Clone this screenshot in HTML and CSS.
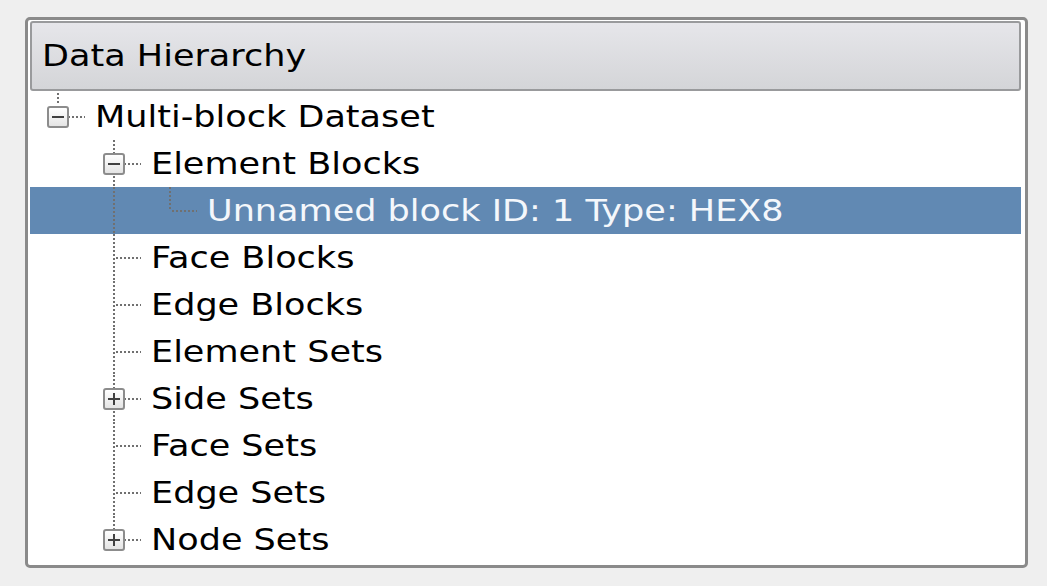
FILE: index.html
```html
<!DOCTYPE html>
<html>
<head>
<meta charset="utf-8">
<link rel="stylesheet" href="styles.css">
</head>
<body>
<div class="frame">
  <div class="header"><span class="wide">Data Hierarchy</span></div>
  <div class="tree">
    <div class="row">
      <span class="cell c-root"><span class="box minus"></span></span>
      <span class="label wide">Multi-block Dataset</span>
    </div>
    <div class="row">
      <span class="cell"></span>
      <span class="cell c-tee"><span class="box minus"></span></span>
      <span class="label wide">Element Blocks</span>
    </div>
    <div class="row selected">
      <span class="cell"></span>
      <span class="cell c-pipe"></span>
      <span class="cell c-end"></span>
      <span class="label wide">Unnamed block ID: 1 Type: HEX8</span>
    </div>
    <div class="row">
      <span class="cell"></span>
      <span class="cell c-tee"></span>
      <span class="label wide">Face Blocks</span>
    </div>
    <div class="row">
      <span class="cell"></span>
      <span class="cell c-tee"></span>
      <span class="label wide">Edge Blocks</span>
    </div>
    <div class="row">
      <span class="cell"></span>
      <span class="cell c-tee"></span>
      <span class="label wide">Element Sets</span>
    </div>
    <div class="row">
      <span class="cell"></span>
      <span class="cell c-tee"><span class="box plus"></span></span>
      <span class="label wide">Side Sets</span>
    </div>
    <div class="row">
      <span class="cell"></span>
      <span class="cell c-tee"></span>
      <span class="label wide">Face Sets</span>
    </div>
    <div class="row">
      <span class="cell"></span>
      <span class="cell c-tee"></span>
      <span class="label wide">Edge Sets</span>
    </div>
    <div class="row">
      <span class="cell"></span>
      <span class="cell c-end"><span class="box plus"></span></span>
      <span class="label wide">Node Sets</span>
    </div>
  </div>
</div>
</body>
</html>
```
FILE: styles.css
```css
html, body {
  margin: 0;
  padding: 0;
  background: #efefef;
}
body {
  padding: 17px 0 0 25px;
  font-family: "DejaVu Sans", "Liberation Sans", sans-serif;
  font-size: 30px;
  color: #000;
}
.frame {
  box-sizing: border-box;
  width: 1003px;
  height: 551px;
  border: 3px solid #8a8a8a;
  border-radius: 5px;
  background: #fff;
  padding: 1px 4px 0 2px;
}
.header {
  box-sizing: border-box;
  height: 70px;
  border: 2px solid #999a9c;
  border-radius: 3px;
  background: linear-gradient(to bottom, #e6e6ea, #d4d5d8);
  display: flex;
  align-items: center;
  padding-left: 10px;
  padding-bottom: 1px;
}
.wide {
  display: inline-block;
  white-space: nowrap;
  transform: scaleX(1.168);
  transform-origin: 0 50%;
}
.tree {
  padding-top: 2px;
}
.row {
  display: flex;
  align-items: center;
  height: 47px;
}
.row.selected {
  background: #6189b3;
  color: #f4f7fb;
}
.cell {
  flex: 0 0 56px;
  width: 56px;
  height: 100%;
  display: flex;
  align-items: center;
  justify-content: center;
  background-repeat: no-repeat;
  --vdot: repeating-linear-gradient(to bottom, #707070 0 2px, transparent 2px 4px);
  --hdot: repeating-linear-gradient(to right, #707070 0 2px, transparent 2px 4px);
}
.c-pipe {
  background-image: var(--vdot);
  background-size: 2px 100%;
  background-position: 27px 0;
}
.c-tee {
  background-image: var(--vdot), var(--hdot);
  background-size: 2px 100%, 25px 2px;
  background-position: 27px 0, 30px 50%;
}
.c-end {
  background-image: var(--vdot), var(--hdot);
  background-size: 2px 50%, 25px 2px;
  background-position: 27px 0, 30px 50%;
}
.c-root {
  background-image: var(--vdot), var(--hdot);
  background-size: 2px 10px, 25px 2px;
  background-position: 27px 0, 30px 50%;
}
.box {
  box-sizing: border-box;
  width: 22px;
  height: 22px;
  border: 2px solid #8c8c8c;
  border-radius: 3px;
  background: linear-gradient(to bottom, #ffffff, #e4e4e4);
  display: flex;
  align-items: center;
  justify-content: center;
}
.box::before {
  content: "";
  display: block;
  width: 12px;
  height: 2px;
  background: #404040;
}
.box.plus {
  background-image: linear-gradient(#404040, #404040), linear-gradient(to bottom, #ffffff, #e4e4e4);
  background-size: 2px 12px, 100% 100%;
  background-position: center, 0 0;
  background-repeat: no-repeat;
}
.label {
  margin-left: 9px;
}
```
